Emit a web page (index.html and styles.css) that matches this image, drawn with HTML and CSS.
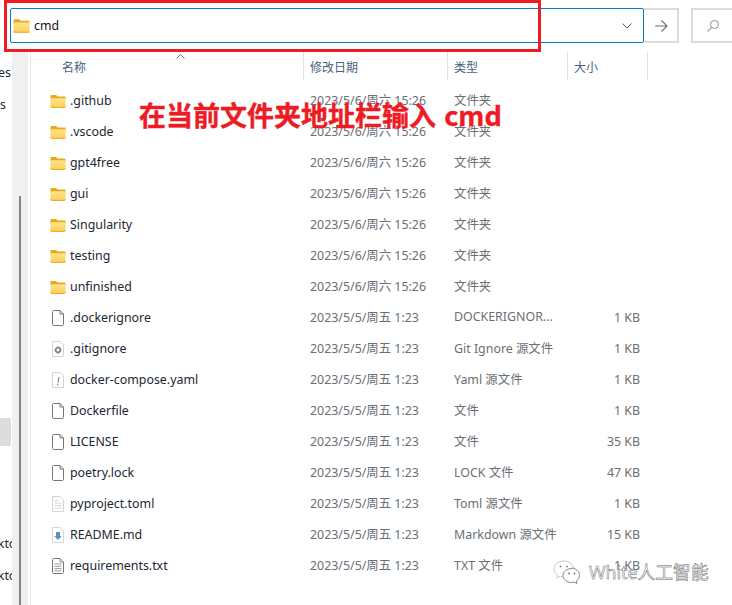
FILE: index.html
```html
<!DOCTYPE html>
<html lang="zh">
<head>
<meta charset="utf-8">
<title>cmd</title>
<link rel="stylesheet" href="styles.css">
</head>
<body>
<svg class="defs" width="0" height="0" aria-hidden="true">
  <defs>
    <linearGradient id="fg" x1="0" y1="0" x2="0" y2="1"><stop offset="0" stop-color="#ffe38a"/><stop offset="1" stop-color="#fcd05c"/></linearGradient>
    <symbol id="folder" viewBox="0 0 16 16">
      <path d="M0.5 3.2C0.5 2.5 1 2 1.7 2H6l1.6 1.6h6.8c.7 0 1.1.5 1.1 1.1V7H.5z" fill="#e9a91c"/>
      <path d="M.5 5.2h15v8c0 .7-.5 1.2-1.2 1.2H1.7c-.7 0-1.2-.5-1.2-1.2z" fill="url(#fg)"/>
      <path d="M.5 13.3c0 .7.5 1.1 1.2 1.1h12.6c.7 0 1.2-.4 1.2-1.1" fill="none" stroke="#e9a91c"/>
    </symbol>
    <symbol id="doc" viewBox="0 0 12 16">
      <path d="M.5 1.500C.5 1 1 .5 1.500.5H8L11.500 4v10.500c0 .5-.5 1-1 1h-9c-.5 0-1-.5-1-1z" fill="#fff" stroke="#777"/>
      <path d="M8 .5V4h3.500" fill="none" stroke="#777"/>
    </symbol>
    <symbol id="gear" viewBox="0 0 12 16">
      <path d="M.5.5H8L11.500 4v11.500H.5z" fill="#fff" stroke="#d4d4d4"/>
      <circle cx="6" cy="9" r="2.300" fill="#fff" stroke="#79848c" stroke-width="1.700"/>
      <path d="M6 5.200v1.200M6 11.600v1.200M2.200 9h1.200M8.600 9h1.200" stroke="#79848c" stroke-width="1.100"/>
    </symbol>
    <symbol id="yaml" viewBox="0 0 12 16">
      <path d="M.5.5H8L11.500 4v11.500H.5z" fill="#fff" stroke="#d4d4d4"/>
      <path d="M7 5 6 10.500M5.600 11.800v1.500" stroke="#9b66b8" stroke-width="1.200" fill="none"/>
    </symbol>
    <symbol id="text" viewBox="0 0 12 16">
      <path d="M.5.5H8L11.500 4v11.500H.5z" fill="#fff" stroke="#d4d4d4"/>
      <path d="M2.500 4.500h4M2.500 7h7M2.500 9.500h7M2.500 12h7" stroke="#d4d4d4"/>
    </symbol>
    <symbol id="md" viewBox="0 0 12 16">
      <path d="M.5.5H8L11.500 4v11.500H.5z" fill="#fff" stroke="#d4d4d4"/>
      <path d="M4 5h4v4h1.800L6 13 2.200 9H4z" fill="#5d93b5"/>
    </symbol>
    <symbol id="txt" viewBox="0 0 12 16">
      <path d="M.5 1.500C.5 1 1 .5 1.500.5H8L11.500 4v10.500c0 .5-.5 1-1 1h-9c-.5 0-1-.5-1-1z" fill="#fff" stroke="#777"/>
      <path d="M8 .5V4h3.500M2.500 6h7M2.500 8.300h7M2.500 10.600h7M2.500 12.900h7" fill="none" stroke="#999"/>
    </symbol>
  </defs>
</svg>

<div class="window">
  <header class="toolbar">
    <div class="address">
      <svg class="addr-folder"><use href="#folder"/></svg>
      <span class="addr-text">cmd</span>
      <svg class="chev" viewBox="0 0 10 6"><path d="M.5.500 5 5 9.500.500" fill="none" stroke="#555"/></svg>
    </div>
    <button class="go" type="button" aria-label="转到">
      <svg viewBox="0 0 14 14" width="14" height="14"><path d="M1 7h12M7.500 1.500 13 7l-5.500 5.500" fill="none" stroke="#6e6e6e" stroke-width="1.100"/></svg>
    </button>
    <div class="search">
      <svg viewBox="0 0 14 14" width="14" height="14"><circle cx="8.500" cy="5.500" r="4" fill="none" stroke="#8d8d9a"/><path d="M5.500 8.500 1.500 12.500" stroke="#b79ab4" stroke-width="1.200"/></svg>
    </div>
  </header>

  <div class="body">
    <nav class="sidebar">
      <span class="side-item first">Pictures</span>
      <span class="side-item second">Videos</span>
      <span class="side-sel"></span>
      <span class="side-item third">Desktop</span>
      <span class="side-item fourth">Desktop</span>
    </nav>
    <div class="scroll-strip"><div class="thumb"></div></div>

    <main class="files">
      <div class="sort-mark"><svg viewBox="0 0 9 5" width="9" height="5"><path d="M.5 4.500 4.500.5l4 4" fill="none" stroke="#777"/></svg></div>
      <div class="head">
        <div class="h h-name">名称</div>
        <div class="h h-date">修改日期</div>
        <div class="h h-type">类型</div>
        <div class="h h-size">大小</div>
      </div>

      <div class="row"><svg class="ic-f"><use href="#folder"/></svg><span class="name">.github</span><span class="date">2023/5/6/周六 15:26</span><span class="type">文件夹</span><span class="size"></span></div>
      <div class="row"><svg class="ic-f"><use href="#folder"/></svg><span class="name">.vscode</span><span class="date">2023/5/6/周六 15:26</span><span class="type">文件夹</span><span class="size"></span></div>
      <div class="row"><svg class="ic-f"><use href="#folder"/></svg><span class="name">gpt4free</span><span class="date">2023/5/6/周六 15:26</span><span class="type">文件夹</span><span class="size"></span></div>
      <div class="row"><svg class="ic-f"><use href="#folder"/></svg><span class="name">gui</span><span class="date">2023/5/6/周六 15:26</span><span class="type">文件夹</span><span class="size"></span></div>
      <div class="row"><svg class="ic-f"><use href="#folder"/></svg><span class="name">Singularity</span><span class="date">2023/5/6/周六 15:26</span><span class="type">文件夹</span><span class="size"></span></div>
      <div class="row"><svg class="ic-f"><use href="#folder"/></svg><span class="name">testing</span><span class="date">2023/5/6/周六 15:26</span><span class="type">文件夹</span><span class="size"></span></div>
      <div class="row"><svg class="ic-f"><use href="#folder"/></svg><span class="name">unfinished</span><span class="date">2023/5/6/周六 15:26</span><span class="type">文件夹</span><span class="size"></span></div>
      <div class="row"><svg class="ic-d"><use href="#doc"/></svg><span class="name">.dockerignore</span><span class="date">2023/5/5/周五 1:23</span><span class="type">DOCKERIGNOR...</span><span class="size">1 KB</span></div>
      <div class="row"><svg class="ic-d"><use href="#gear"/></svg><span class="name">.gitignore</span><span class="date">2023/5/5/周五 1:23</span><span class="type">Git Ignore 源文件</span><span class="size">1 KB</span></div>
      <div class="row"><svg class="ic-d"><use href="#yaml"/></svg><span class="name">docker-compose.yaml</span><span class="date">2023/5/5/周五 1:23</span><span class="type">Yaml 源文件</span><span class="size">1 KB</span></div>
      <div class="row"><svg class="ic-d"><use href="#doc"/></svg><span class="name">Dockerfile</span><span class="date">2023/5/5/周五 1:23</span><span class="type">文件</span><span class="size">1 KB</span></div>
      <div class="row"><svg class="ic-d"><use href="#doc"/></svg><span class="name">LICENSE</span><span class="date">2023/5/5/周五 1:23</span><span class="type">文件</span><span class="size">35 KB</span></div>
      <div class="row"><svg class="ic-d"><use href="#doc"/></svg><span class="name">poetry.lock</span><span class="date">2023/5/5/周五 1:23</span><span class="type">LOCK 文件</span><span class="size">47 KB</span></div>
      <div class="row"><svg class="ic-d"><use href="#text"/></svg><span class="name">pyproject.toml</span><span class="date">2023/5/5/周五 1:23</span><span class="type">Toml 源文件</span><span class="size">1 KB</span></div>
      <div class="row"><svg class="ic-d"><use href="#md"/></svg><span class="name">README.md</span><span class="date">2023/5/5/周五 1:23</span><span class="type">Markdown 源文件</span><span class="size">15 KB</span></div>
      <div class="row"><svg class="ic-d"><use href="#txt"/></svg><span class="name">requirements.txt</span><span class="date">2023/5/5/周五 1:23</span><span class="type">TXT 文件</span><span class="size">1 KB</span></div>
    </main>
  </div>
</div>

<div class="red-box"></div>
<div class="callout">在当前文件夹地址栏输入 cmd</div>

<div class="watermark">
  <svg class="wechat" viewBox="0 0 28 24" width="28" height="24">
    <path d="M11 1C5.500 1 1 4.600 1 9c0 2.500 1.400 4.600 3.600 6.100L3.700 18l3.200-1.700c1.100.3 2.300.5 3.500.5" fill="#fff" stroke="#aaa" stroke-width=".8" stroke-dasharray="2 .6"/>
    <path d="M21 9C20 4.500 16 1 11 1" fill="none" stroke="#aaa" stroke-width=".8" stroke-dasharray="2 .6"/>
    <path d="M18.500 8.500c-4.700 0-8.500 3.100-8.500 7s3.800 7 8.500 7c1 0 1.900-.1 2.800-.4l2.700 1.400-.7-2.400c1.900-1.300 3.200-3.300 3.200-5.600 0-3.900-3.800-7.500-8-7.400z" fill="#fff" stroke="#777" stroke-width=".9"/>
    <circle cx="7.500" cy="6.500" r="1" fill="#888"/><circle cx="14" cy="6.500" r="1" fill="#888"/>
    <circle cx="16" cy="13.500" r=".9" fill="#777"/><circle cx="21.500" cy="13.500" r=".9" fill="#777"/>
  </svg>
  <span class="wm-text">White人工智能</span>
</div>
</body>
</html>
```

FILE: styles.css
```css
* { box-sizing: border-box; }
html, body { margin: 0; padding: 0; height: 100%; overflow: hidden; background: #fff; }
body {
  position: relative;
  width: 732px;
  height: 605px;
  font-family: "Noto Sans", "Noto Sans CJK SC", sans-serif;
  font-size: 12.4px;
  color: #1b2733;
}
.defs { position: absolute; }

.window { display: flex; flex-direction: column; height: 605px; }

.toolbar { display: flex; height: 52px; padding: 8px 0 0 10px; flex: none; }
.address {
  display: flex; align-items: center;
  width: 634px; height: 35px;
  border: 1px solid #0078d4;
  border-radius: 2px;
  padding-left: 2px;
}
.addr-folder { width: 17px; height: 17px; flex: none; }
.addr-text { margin-left: 4px; font-size: 12.3px; color: #111; flex: 1; }
.chev { width: 10px; height: 6px; margin-right: 11px; }
.go {
  width: 35px; height: 35px; padding: 0;
  display: flex; align-items: center; justify-content: center;
  background: #fff;
  border: 2px solid #dcdcdc; border-left: 0;
}
.search {
  width: 41px; height: 35px; margin-left: 12px;
  display: flex; align-items: center; justify-content: center;
  border: 2px solid #dcdcdc; border-right: 0;
}

.body { display: flex; flex: 1; min-height: 0; }

.sidebar { width: 12px; flex: none; position: relative; overflow: hidden; }
.side-item { position: absolute; white-space: nowrap; color: #1b2733; }
.side-item.first { top: 12px; right: 1px; }
.side-item.second { top: 44px; right: 6px; }
.side-item.third { top: 483px; right: -12px; }
.side-item.fourth { top: 515px; right: -12px; }
.side-sel {
  position: absolute; left: 0; top: 366px;
  width: 11px; height: 28px;
  background: #dcdcdc; border-radius: 0 2px 2px 0;
}

.scroll-strip { width: 16px; flex: none; background: #f0f0f0; position: relative; }
.thumb { position: absolute; left: 7px; top: 144px; bottom: 0; width: 2px; background: #858585; }

.files {
  flex: 1; position: relative;
  border-left: 1px solid #ececec; margin-left: 2px;
}
.sort-mark { position: absolute; left: 145px; top: 2px; line-height: 0; }

.head {
  display: grid;
  grid-template-columns: 273px 144px 120px 80px;
  height: 28px;
  margin-bottom: 5px;
}
.h {
  display: flex; align-items: center;
  color: #4c607a;
  font-size: 12px;
  border-right: 1px solid #e1e1e1;
  padding-left: 6px;
  padding-top: 2px;
}
.h-name { padding-left: 31px; }

.row {
  display: grid;
  grid-template-columns: 39px 240px 144px 120px 66px;
  align-items: center;
  height: 31px;
  white-space: nowrap;
}
.ic-f { width: 16px; height: 16px; margin-left: 19px; }
.ic-d { width: 12px; height: 16px; margin-left: 21px; }
.name { color: #1b2733; }
.date, .type, .size { color: #6a6f76; }
.date, .type { padding-bottom: 2px; }
.size { text-align: right; }

.red-box {
  position: absolute; left: 4px; top: 0;
  width: 537px; height: 52px;
  border: 3px solid #ed1c24;
}
.callout {
  position: absolute; left: 139px; top: 96px;
  font-size: 27px; line-height: 38px; font-weight: 700;
  color: #ed1c24; white-space: nowrap;
  word-spacing: 2px;
  -webkit-text-stroke: .4px #ed1c24;
  font-family: "Noto Sans CJK SC", "Noto Sans", sans-serif;
}

.watermark {
  position: absolute; left: 553px; top: 560px;
  display: flex; align-items: center; gap: 8px;
}
.wm-text {
  font-size: 17.8px; line-height: 24px;
  font-family: "Noto Sans", "Noto Sans CJK SC", sans-serif;
  color: rgba(255,255,255,.6);
  -webkit-text-stroke: .5px #666;
}
```
